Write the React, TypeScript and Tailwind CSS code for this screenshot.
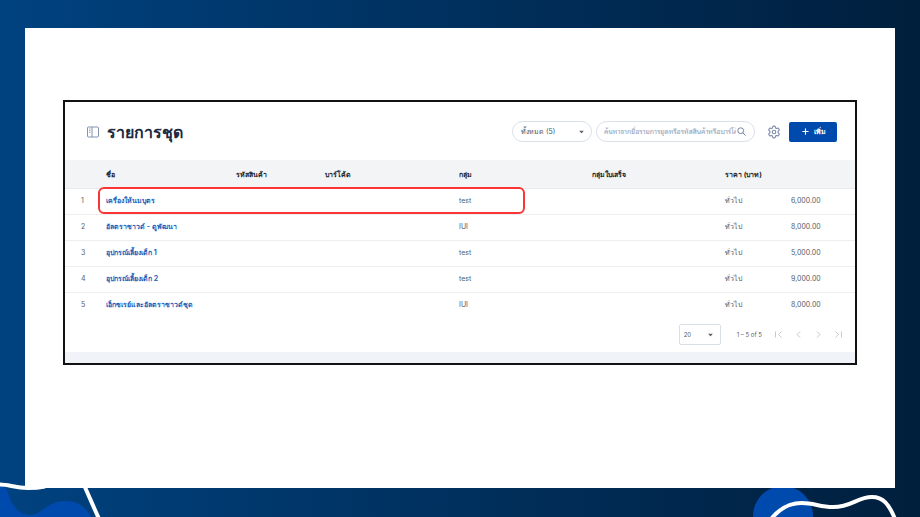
import { LuPlus } from "react-icons/lu";

type Item = { id: number; name: string; group: string; amount: string };

const items: Item[] = [
  { id: 1, name: "เครื่องให้นมบุตร", group: "test", amount: "6,000.00" },
  { id: 2, name: "อัลตราซาวด์ - ดูพัฒนา", group: "IUI", amount: "8,000.00" },
  { id: 3, name: "อุปกรณ์เลี้ยงเด็ก 1", group: "test", amount: "5,000.00" },
  { id: 4, name: "อุปกรณ์เลี้ยงเด็ก 2", group: "test", amount: "9,000.00" },
  { id: 5, name: "เอ็กซเรย์และอัลตราซาวด์ชุด", group: "IUI", amount: "8,000.00" },
];

const columns = [
  { label: "", width: "w-[41px]" },
  { label: "ชื่อ", width: "w-[130px]" },
  { label: "รหัสสินค้า", width: "w-[89px]" },
  { label: "บาร์โค้ด", width: "w-[134px]" },
  { label: "กลุ่ม", width: "w-[133px]" },
  { label: "กลุ่มใบเสร็จ", width: "w-[133px]" },
  { label: "ราคา (บาท)", width: "w-[66px]" },
  { label: "", width: "w-[64px]" },
];

// First / previous / next / last arrows
const pagers = [
  { label: "First page", path: "M1.5 1.5v6M7.5 1.5l-3 3 3 3" },
  { label: "Previous page", path: "M6 1.5l-3 3 3 3" },
  { label: "Next page", path: "M3 1.5l3 3-3 3" },
  { label: "Last page", path: "M7.5 1.5v6M1.5 1.5l3 3-3 3" },
];

const Caret = () => (
  <svg
    className="pointer-events-none absolute right-2 top-1/2 -translate-y-1/2"
    width="5"
    height="3"
    viewBox="0 0 5 3"
    fill="#5b626c"
    aria-hidden="true"
  >
    <path d="M0 0h5L2.5 3z" />
  </svg>
);

const PanelIcon = () => (
  <svg width="12" height="12" viewBox="0 0 12 12" fill="none" stroke="#8593ad" aria-hidden="true">
    <rect x="0.5" y="1" width="11" height="10" rx="1" />
    <path d="M5 1v10" />
    <path d="M2 3h1.5M2 4.7h1.5M2 6.4h1.5" strokeWidth="0.8" />
  </svg>
);

const GearIcon = () => (
  <svg
    width="14"
    height="14"
    viewBox="0 0 24 24"
    fill="none"
    stroke="#7b8aa6"
    strokeWidth="1.9"
    strokeLinejoin="round"
    aria-hidden="true"
  >
    <path d="M9.6 3.9c.1-.9.6-1.9 1.3-1.9h2.2c.7 0 1.2 1 1.3 1.9l.2 1.3 1.6.9 1.3-.5c.9-.3 1.9-.4 2.3.3l1.1 1.9c.4.7-.2 1.5-.9 2.1l-1 .9v2.4l1 .9c.7.6 1.3 1.4.9 2.1l-1.1 1.9c-.4.7-1.4.6-2.3.3l-1.3-.5-1.6.9-.2 1.3c-.1.9-.6 1.9-1.3 1.9h-2.2c-.7 0-1.2-1-1.3-1.9l-.2-1.3-1.6-.9-1.3.5c-.9.3-1.9.4-2.3-.3l-1.1-1.9c-.4-.7.2-1.5.9-2.1l1-.9v-2.4l-1-.9c-.7-.6-1.3-1.4-.9-2.1l1.1-1.9c.4-.7 1.4-.6 2.3-.3l1.3.5 1.6-.9z" />
    <circle cx="12" cy="12" r="3" />
  </svg>
);

const Waves = () => (
  <>
    {/* left blob, hidden behind the sheet */}
    <svg className="absolute bottom-0 left-0" width="110" height="47" viewBox="0 0 110 47" aria-hidden="true">
      <path
        d="M0 13C4 14 6 18 8 23C13 39 21 45 30 45C42 45 46 31 66 31C80 31 88 40 91 47H0z"
        fill="#004aad"
      />
      <path d="M84 15L99 49" stroke="#fff" strokeWidth="4" />
    </svg>
    <svg className="absolute bottom-0 right-0" width="190" height="47" viewBox="0 0 190 47" aria-hidden="true">
      <circle cx="53" cy="46" r="30" fill="#004aad" />
      <path
        d="M41 49C50 38 59 33 72 33C84 33 90 37 103 37C122 37 127 27 142 27C153 27 159 34 165 49"
        fill="none"
        stroke="#fff"
        strokeWidth="4"
      />
    </svg>
  </>
);

const Toolbar = () => (
  <div className="flex items-center justify-between pl-[22px] pr-[18px] pt-[19px] pb-[18px]">
    <div className="flex items-center gap-2">
      <PanelIcon />
      <h1 className="text-base leading-5 font-bold text-[#1b2a41]">รายการชุด</h1>
    </div>
    <div className="flex items-center">
      <div className="relative mr-1">
        <select
          aria-label="ตัวกรอง"
          className="h-[21px] w-20 appearance-none rounded-full border border-[#d9dfe9] bg-white pl-2 text-[#4b5563]"
        >
          <option>ทั้งหมด (5)</option>
        </select>
        <Caret />
      </div>
      <div className="flex h-[21px] w-[159px] items-center rounded-full border border-[#d9dfe9] pl-[7px] pr-2">
        <input
          type="text"
          aria-label="ค้นหา"
          placeholder="ค้นหาจากชื่อรายการชุดหรือรหัสสินค้าหรือบาร์โค้ด"
          className="mr-px min-w-0 flex-1 font-['Inter','Noto_Sans_Thai_Looped',sans-serif] outline-none placeholder:text-[#8f9bb3]"
        />
        <svg width="9" height="9" viewBox="0 0 9 9" fill="none" stroke="#7383a2" aria-hidden="true">
          <circle cx="3.7" cy="3.7" r="2.9" />
          <path d="M5.8 5.8L8.6 8.6" />
        </svg>
      </div>
      <button type="button" aria-label="ตั้งค่า" className="ml-3 mr-2">
        <GearIcon />
      </button>
      <button
        type="button"
        className="flex h-5 w-12 items-center justify-center gap-1 rounded-xs bg-[#004aad] font-bold text-white"
      >
        <LuPlus size={9} strokeWidth={3} />
        เพิ่ม
      </button>
    </div>
  </div>
);

const Table = () => (
  <table className="w-full table-fixed text-left">
    <thead>
      <tr className="h-7 border-b border-[#e8eaed] bg-[#f2f4f6] text-[#20242b]">
        {columns.map((col, index) => (
          <th key={index} className={`${col.width} px-0 pt-0.5 pb-0 font-bold whitespace-nowrap`}>
            {col.label}
          </th>
        ))}
      </tr>
    </thead>
    <tbody className="text-[#565c66]">
      {items.map((item) => (
        <tr key={item.id} className="relative h-[26px] border-b border-[#eceef0] last:h-[25px] last:border-0">
          <td className="pl-4">{item.id}</td>
          <td className="whitespace-nowrap">
            <a href={`#${item.id}`} className="font-bold text-[#1d5fb8]">
              {item.name}
            </a>
            {item.id === 1 && (
              <span className="pointer-events-none absolute -inset-y-px left-[33px] w-[54%] rounded-md border-2 border-[#fb3434]" />
            )}
          </td>
          <td />
          <td />
          <td>{item.group}</td>
          <td />
          <td>ทั่วไป</td>
          <td>{item.amount}</td>
        </tr>
      ))}
    </tbody>
  </table>
);

const Pagination = () => (
  <div className="flex h-[35px] items-center justify-end pr-3 text-[6px] text-[#565c66]">
    <div className="relative mr-4">
      <select
        aria-label="จำนวนต่อหน้า"
        className="h-[21px] w-[42px] appearance-none rounded-xs border border-[#d9dfe9] bg-white pl-1"
      >
        <option>20</option>
      </select>
      <Caret />
    </div>
    <span className="mr-3">1 – 5 of 5</span>
    <div className="flex gap-[11px]">
      {pagers.map((pager) => (
        <button key={pager.label} type="button" aria-label={pager.label} disabled>
          <svg width="9" height="9" viewBox="0 0 9 9" fill="none" stroke="#c6c9ce" aria-hidden="true">
            <path d={pager.path} />
          </svg>
        </button>
      ))}
    </div>
  </div>
);

export default function App() {
  return (
    <div className="relative flex min-h-screen flex-col overflow-hidden bg-linear-to-r from-[#004280] to-[#001f3d] px-[25px] pt-7 pb-[29px] font-['Inter',sans-serif] text-[7px] leading-3">
      <Waves />
      <main className="relative flex-1 bg-white px-[38px] pt-[72px] pb-8">
        <section className="border-2 border-[#111]">
          <Toolbar />
          <Table />
          <Pagination />
          <div className="h-[11px] bg-[#f0f3f7]" />
        </section>
      </main>
      {/* thin wave that runs over the sheet's corner */}
      <svg className="absolute bottom-0 left-0" width="60" height="47" viewBox="0 0 60 47" fill="none" aria-hidden="true">
        <path d="M0 14.5C9 14.5 15 18 28 18C36 18 40 17.5 45 16.5" stroke="#fff" strokeWidth="4" />
      </svg>
    </div>
  );
}
